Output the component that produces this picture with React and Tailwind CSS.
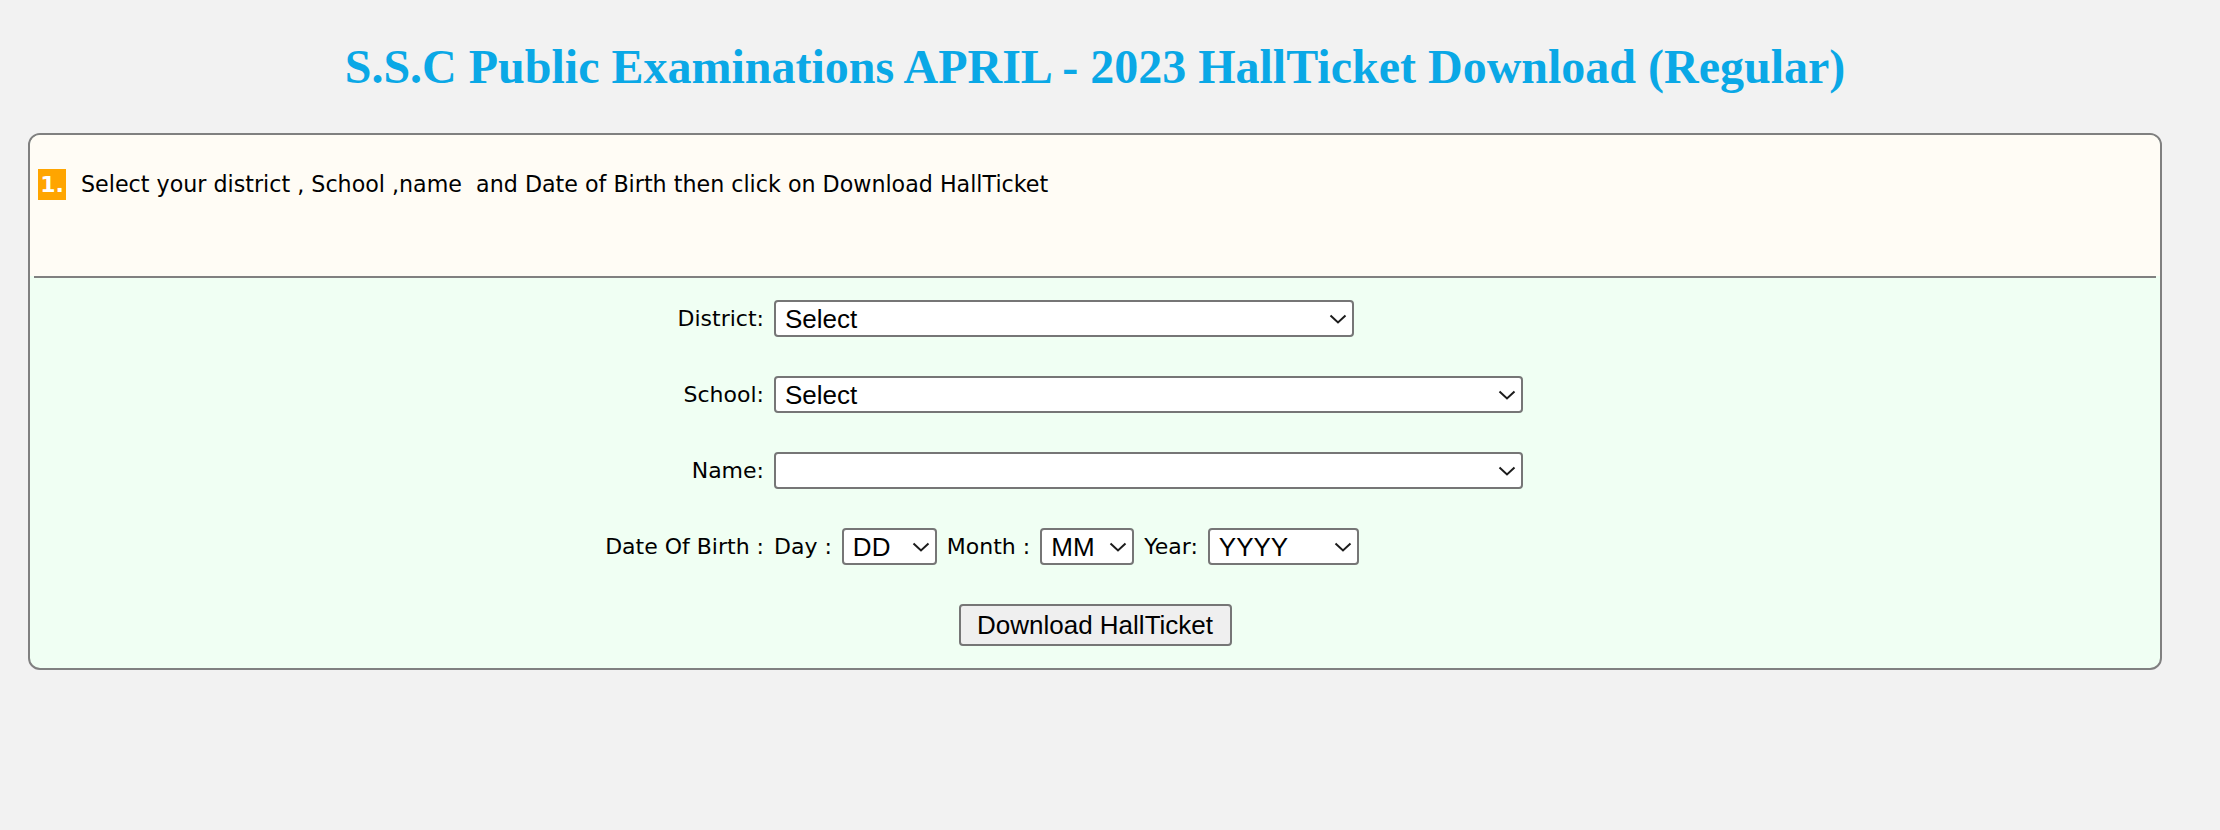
import React from "react";

function Chevron() {
  return (
    <svg
      className="pointer-events-none absolute right-[7px] top-1/2 -translate-y-1/2"
      width="18"
      height="10"
      viewBox="0 0 18 10"
      fill="none"
    >
      <path d="M1.5 1.5 L9 8.5 L16.5 1.5" stroke="#1c1c1c" strokeWidth="2" />
    </svg>
  );
}

function Select({ width, value, options }) {
  return (
    <div className="relative h-[37px] shrink-0" style={{ width }}>
      <select
        defaultValue={value}
        className="h-full w-full appearance-none rounded-[4px] border-2 border-[#767676] bg-white pl-[9px] text-[26px] leading-none text-black outline-none [font-family:'Liberation_Sans',Arial,sans-serif]"
      >
        {options.map((o) => (
          <option key={o} value={o}>
            {o}
          </option>
        ))}
      </select>
      <Chevron />
    </div>
  );
}

const labelCls =
  "w-[200px] shrink-0 pr-[10px] text-right text-[22px] text-black [font-family:'DejaVu_Sans',Verdana,sans-serif]";
const textCls =
  "text-[22px] text-black whitespace-nowrap [font-family:'DejaVu_Sans',Verdana,sans-serif]";

export default function App() {
  return (
    <div className="min-h-[830px] w-full bg-[#f2f2f2] pb-[40px]">
      <div className="ml-[28px] w-[2134px] pt-[39px] text-center">
        <h1 className="text-[48px] font-bold leading-[55px] text-[#0aa8e6] [font-family:'Liberation_Serif','Times_New_Roman',serif]">
          S.S.C Public Examinations APRIL - 2023 HallTicket Download (Regular)
        </h1>
      </div>

      <div className="ml-[28px] mt-[39px] w-[2134px] overflow-hidden rounded-[12px] border-2 border-[#808080] bg-[#f0fff3]">
        <div className="h-[141px] bg-[#fffcf5] pl-[8px] pt-[33px]">
          <div className="flex items-center">
            <span className="flex h-[31px] w-[28px] items-center justify-center bg-[#ffa500] text-[22px] font-bold text-white [font-family:'DejaVu_Sans',Verdana,sans-serif]">
              1.
            </span>
            <span className="ml-[15px] whitespace-nowrap text-[22.2px] text-black [font-family:'DejaVu_Sans',Verdana,sans-serif]">
              Select your district , School ,name&nbsp; and Date of Birth then
              click on Download HallTicket
            </span>
          </div>
        </div>
        <div className="mx-[4px] h-[2px] bg-[#808080]" />

        <div className="flex flex-col gap-[39px] pb-[22px] pt-[22px]">
          <div className="flex flex-col gap-[39px] pl-[544px]">
            <div className="flex h-[37px] items-center">
              <div className={labelCls}>District:</div>
              <Select width={580} value="Select" options={["Select"]} />
            </div>
            <div className="flex h-[37px] items-center">
              <div className={labelCls}>School:</div>
              <Select width={749} value="Select" options={["Select"]} />
            </div>
            <div className="flex h-[37px] items-center">
              <div className={labelCls}>Name:</div>
              <Select width={749} value="" options={[""]} />
            </div>
            <div className="flex h-[37px] items-center">
              <div className={labelCls}>Date Of Birth :</div>
              <div className="flex items-center gap-[10px]">
                <span className={textCls}>Day :</span>
                <Select width={95} value="DD" options={["DD"]} />
                <span className={textCls}>Month :</span>
                <Select width={94} value="MM" options={["MM"]} />
                <span className={textCls}>Year:</span>
                <Select width={151} value="YYYY" options={["YYYY"]} />
              </div>
            </div>
          </div>
          <div className="flex justify-center">
            <button className="h-[42px] w-[273px] rounded-[4px] border-2 border-[#767676] bg-[#efefef] text-[26px] text-black [font-family:'Liberation_Sans',Arial,sans-serif]">
              Download HallTicket
            </button>
          </div>
        </div>
      </div>
    </div>
  );
}
